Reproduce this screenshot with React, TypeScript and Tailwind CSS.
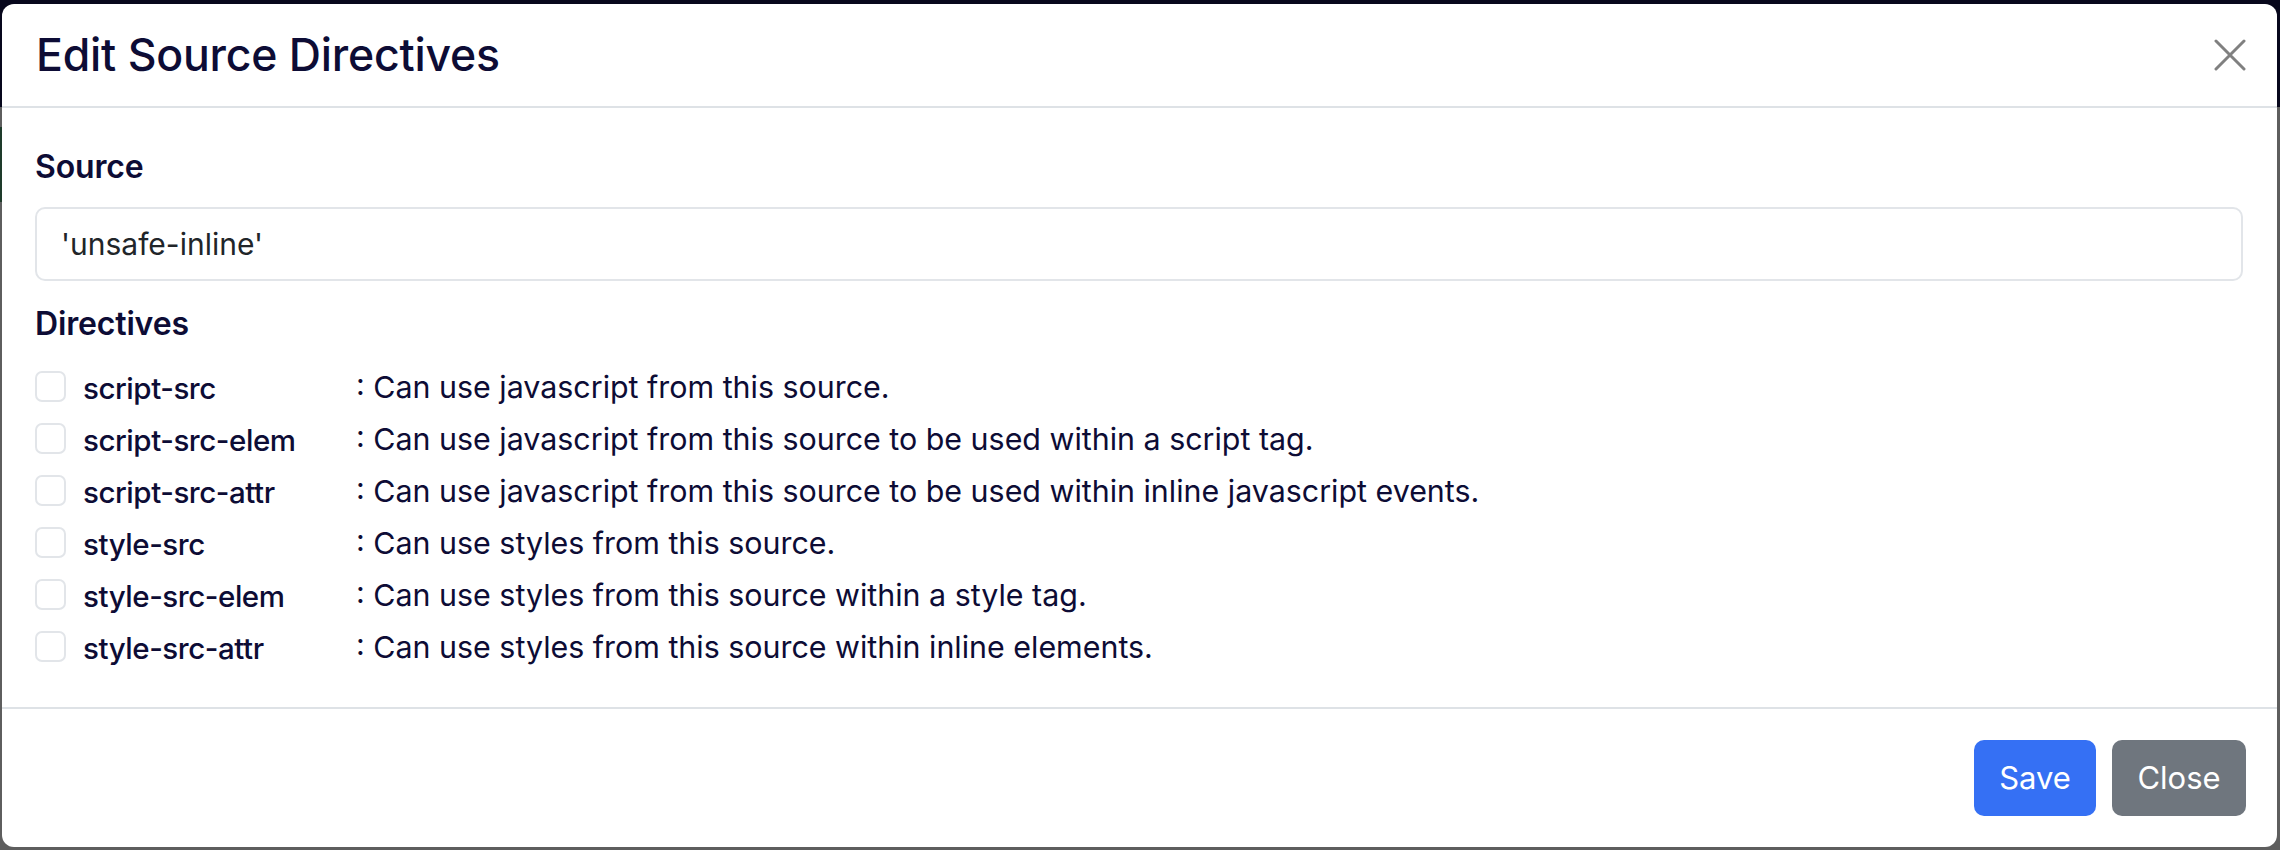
import React from "react";

const rows = [
  ["script-src", ": Can use javascript from this source."],
  ["script-src-elem", ": Can use javascript from this source to be used within a script tag."],
  ["script-src-attr", ": Can use javascript from this source to be used within inline javascript events."],
  ["style-src", ": Can use styles from this source."],
  ["style-src-elem", ": Can use styles from this source within a style tag."],
  ["style-src-attr", ": Can use styles from this source within inline elements."],
];

export default function App() {
  return (
    <div
      className="relative w-[2280px] h-[850px] overflow-hidden bg-[#5e5e5e]"
      style={{ fontFamily: "Inter, 'Noto Sans', sans-serif" }}
    >
      <div className="h-[107px] bg-[#07071c]" />
      <div className="mt-[20px] h-[75px] w-[4px] bg-[#1e3b2b]" />

      <div className="absolute left-[2px] top-[4px] w-[2275px] h-[843px] bg-white rounded-[12px] flex flex-col text-[#0d0c35]">
        <div className="h-[104px] border-b-2 border-[#dee2e6] flex items-center justify-between pl-[34px] pr-[31px]">
          <h5 className="text-[44.6px] font-medium leading-none tracking-[-0.005em]">Edit Source Directives</h5>
          <button className="w-[32px] h-[32px] flex items-center justify-center">
            <svg width="32" height="32" viewBox="0 0 32 32" fill="none">
              <path d="M2 2L30 30M30 2L2 30" stroke="#808080" strokeWidth="3" strokeLinecap="round" />
            </svg>
          </button>
        </div>

        <div className="flex-1 pl-[33px] pr-[34px] pt-[39px]">
          <div className="text-[32px] font-semibold leading-[40px] tracking-[-0.005em]">Source</div>
          <div className="mt-[20px] h-[74px] border-2 border-[#e2e5e9] rounded-[10px] flex items-center pl-[24px] text-[30px] text-[#212529]">
            'unsafe-inline'
          </div>
          <div className="mt-[23px] text-[32px] font-semibold leading-[40px] tracking-[-0.005em]">Directives</div>
          <div className="mt-[16px] flex flex-col">
            {rows.map(([name, desc]) => (
              <div key={name} className="h-[52px] flex items-center">
                <div className="w-[31px] h-[31px] border-2 border-[#e2e5e9] rounded-[7px] shrink-0" />
                <span className="ml-[17px] w-[273px] shrink-0 text-[29.5px] font-medium tracking-[-0.015em] pt-[4px]">{name}</span>
                <span className="text-[30.4px] pt-[4px]">{desc}</span>
              </div>
            ))}
          </div>
        </div>

        <div className="h-[140px] border-t-2 border-[#dee2e6] flex items-center justify-end gap-[16px] pr-[31px]">
          <button className="h-[76px] w-[122px] rounded-[10px] bg-[#3570f4] text-white text-[31px]">Save</button>
          <button className="h-[76px] w-[134px] rounded-[10px] bg-[#6f767e] text-white text-[31px]">Close</button>
        </div>
      </div>
    </div>
  );
}
